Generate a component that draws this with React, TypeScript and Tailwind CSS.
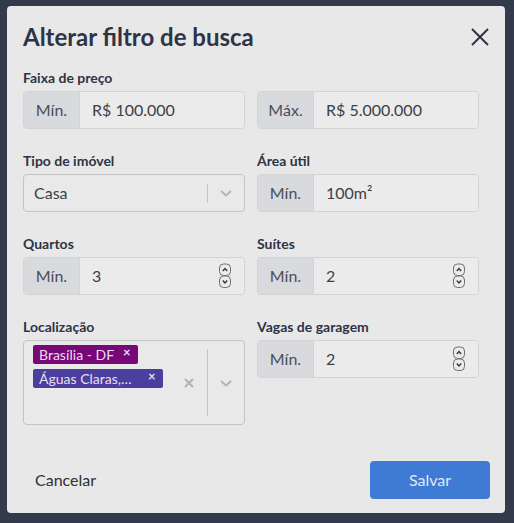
import { ReactNode } from "react";

const Spinner = () => (
  <svg width="14" height="26" viewBox="0 0 14 26" className="shrink-0">
    <rect x="1.5" y="1" width="11" height="11.5" rx="4" fill="none" stroke="#6b6e75" strokeWidth="1" />
    <rect x="1.5" y="13" width="11" height="11.5" rx="4" fill="none" stroke="#6b6e75" strokeWidth="1" />
    <path d="M4.8 8 L7 5.6 L9.2 8" fill="none" stroke="#33363d" strokeWidth="1.4" />
    <path d="M4.8 17.5 L7 19.9 L9.2 17.5" fill="none" stroke="#33363d" strokeWidth="1.4" />
  </svg>
);

const Chevron = () => (
  <svg width="14" height="10" viewBox="0 0 14 10">
    <path d="M2 3 L7 7.5 L12 3" fill="none" stroke="#b3b3b3" strokeWidth="1.8" />
  </svg>
);

function Field({ label, children }: { label: string; children: ReactNode }) {
  return (
    <div className="flex flex-col">
      <label className="text-[14px] leading-5 font-bold text-[#2d3446] mb-[3px]">{label}</label>
      {children}
    </div>
  );
}

function AddonInput({ addon, value, spinner }: { addon: string; value: string; spinner?: boolean }) {
  return (
    <div className="flex h-[38px] rounded border border-[#d3d3d3] overflow-hidden">
      <div className="w-[56px] shrink-0 bg-[#d8dade] border-r border-[#d3d3d3] flex items-center justify-center text-[16px] text-[#4a4e58]">
        {addon}
      </div>
      <div className="flex-1 bg-[#ebebeb] flex items-center pl-3 pr-3 text-[16px] text-[#3b3f48]">
        <span className="flex-1">{value}</span>
        {spinner && <Spinner />}
      </div>
    </div>
  );
}

function Tag({ text, color, textWidth }: { text: string; color: string; textWidth?: string }) {
  return (
    <div className={`self-start flex items-center h-[19px] rounded-[2px] pl-[6px] pr-[7px] text-[14px] leading-none text-[#eadfee] ${color}`}>
      <span className={textWidth}>{text}</span>
      <span className="ml-[9px] text-[13px] font-bold -mt-[4px]">×</span>
    </div>
  );
}

export default function App() {
  return (
    <div
      className="w-[514px] h-[523px] bg-[#323a4c] pt-[6px] pl-[7px]"
      style={{ fontFamily: "Lato, 'Noto Sans', sans-serif" }}
    >
      <div className="w-[498px] h-[507px] bg-[#e8e8e8] rounded-[4px] flex flex-col">
        {/* cabeçalho */}
        <div className="flex items-center justify-between pl-4 pr-[15px] pt-[15px]">
          <h2 className="text-[24px] leading-8 font-bold text-[#2d3446]">Alterar filtro de busca</h2>
          <svg width="20" height="20" viewBox="0 0 20 20">
            <path d="M2 2 L18 18 M18 2 L2 18" stroke="#2d3446" strokeWidth="2" />
          </svg>
        </div>

        {/* campos */}
        <div className="grid grid-cols-2 gap-x-3 gap-y-[22px] pl-4 pr-[26px] mt-[15px]">
          <Field label="Faixa de preço">
            <AddonInput addon="Mín." value="R$ 100.000" />
          </Field>
          <Field label="&nbsp;">
            <AddonInput addon="Máx." value="R$ 5.000.000" />
          </Field>

          <Field label="Tipo de imóvel">
            <div className="flex items-center h-[38px] rounded border border-[#c4c4c4] bg-[#e9e9e9]">
              <span className="flex-1 pl-[10px] text-[16px] text-[#3b3f48]">Casa</span>
              <div className="w-px h-[19px] bg-[#c4c4c4]" />
              <div className="w-[36px] flex justify-center">
                <Chevron />
              </div>
            </div>
          </Field>
          <Field label="Área útil">
            <AddonInput addon="Mín." value="100m²" />
          </Field>

          <Field label="Quartos">
            <AddonInput addon="Mín." value="3" spinner />
          </Field>
          <Field label="Suítes">
            <AddonInput addon="Mín." value="2" spinner />
          </Field>

          <Field label="Localização">
            <div className="flex h-[85px] rounded border border-[#c4c4c4] bg-[#e9e9e9]">
              <div className="flex-1 flex flex-col gap-[5px] pl-[9px] pt-[4px]">
                <Tag text="Brasília - DF" color="bg-[#780778]" />
                <Tag text="Águas Claras,…" color="bg-[#4a3f9f]" textWidth="w-[100px]" />
              </div>
              <div className="w-[36px] flex items-center justify-center">
                <svg width="12" height="12" viewBox="0 0 12 12">
                  <path d="M2 2 L10 10 M10 2 L2 10" stroke="#b3b3b3" strokeWidth="2" />
                </svg>
              </div>
              <div className="w-px bg-[#c4c4c4] my-[8px]" />
              <div className="w-[36px] flex items-center justify-center">
                <Chevron />
              </div>
            </div>
          </Field>
          <Field label="Vagas de garagem">
            <div>
              <AddonInput addon="Mín." value="2" spinner />
            </div>
          </Field>
        </div>

        {/* rodapé */}
        <div className="mt-auto flex items-center justify-between pl-[16px] pr-[15px] pb-[14px]">
          <button className="h-[38px] px-3 text-[16px] text-[#2d2f36]">Cancelar</button>
          <button className="w-[120px] h-[38px] rounded-[4px] bg-[#3f7bd4] text-[16px] text-[#dfe8f6]">Salvar</button>
        </div>
      </div>
    </div>
  );
}
